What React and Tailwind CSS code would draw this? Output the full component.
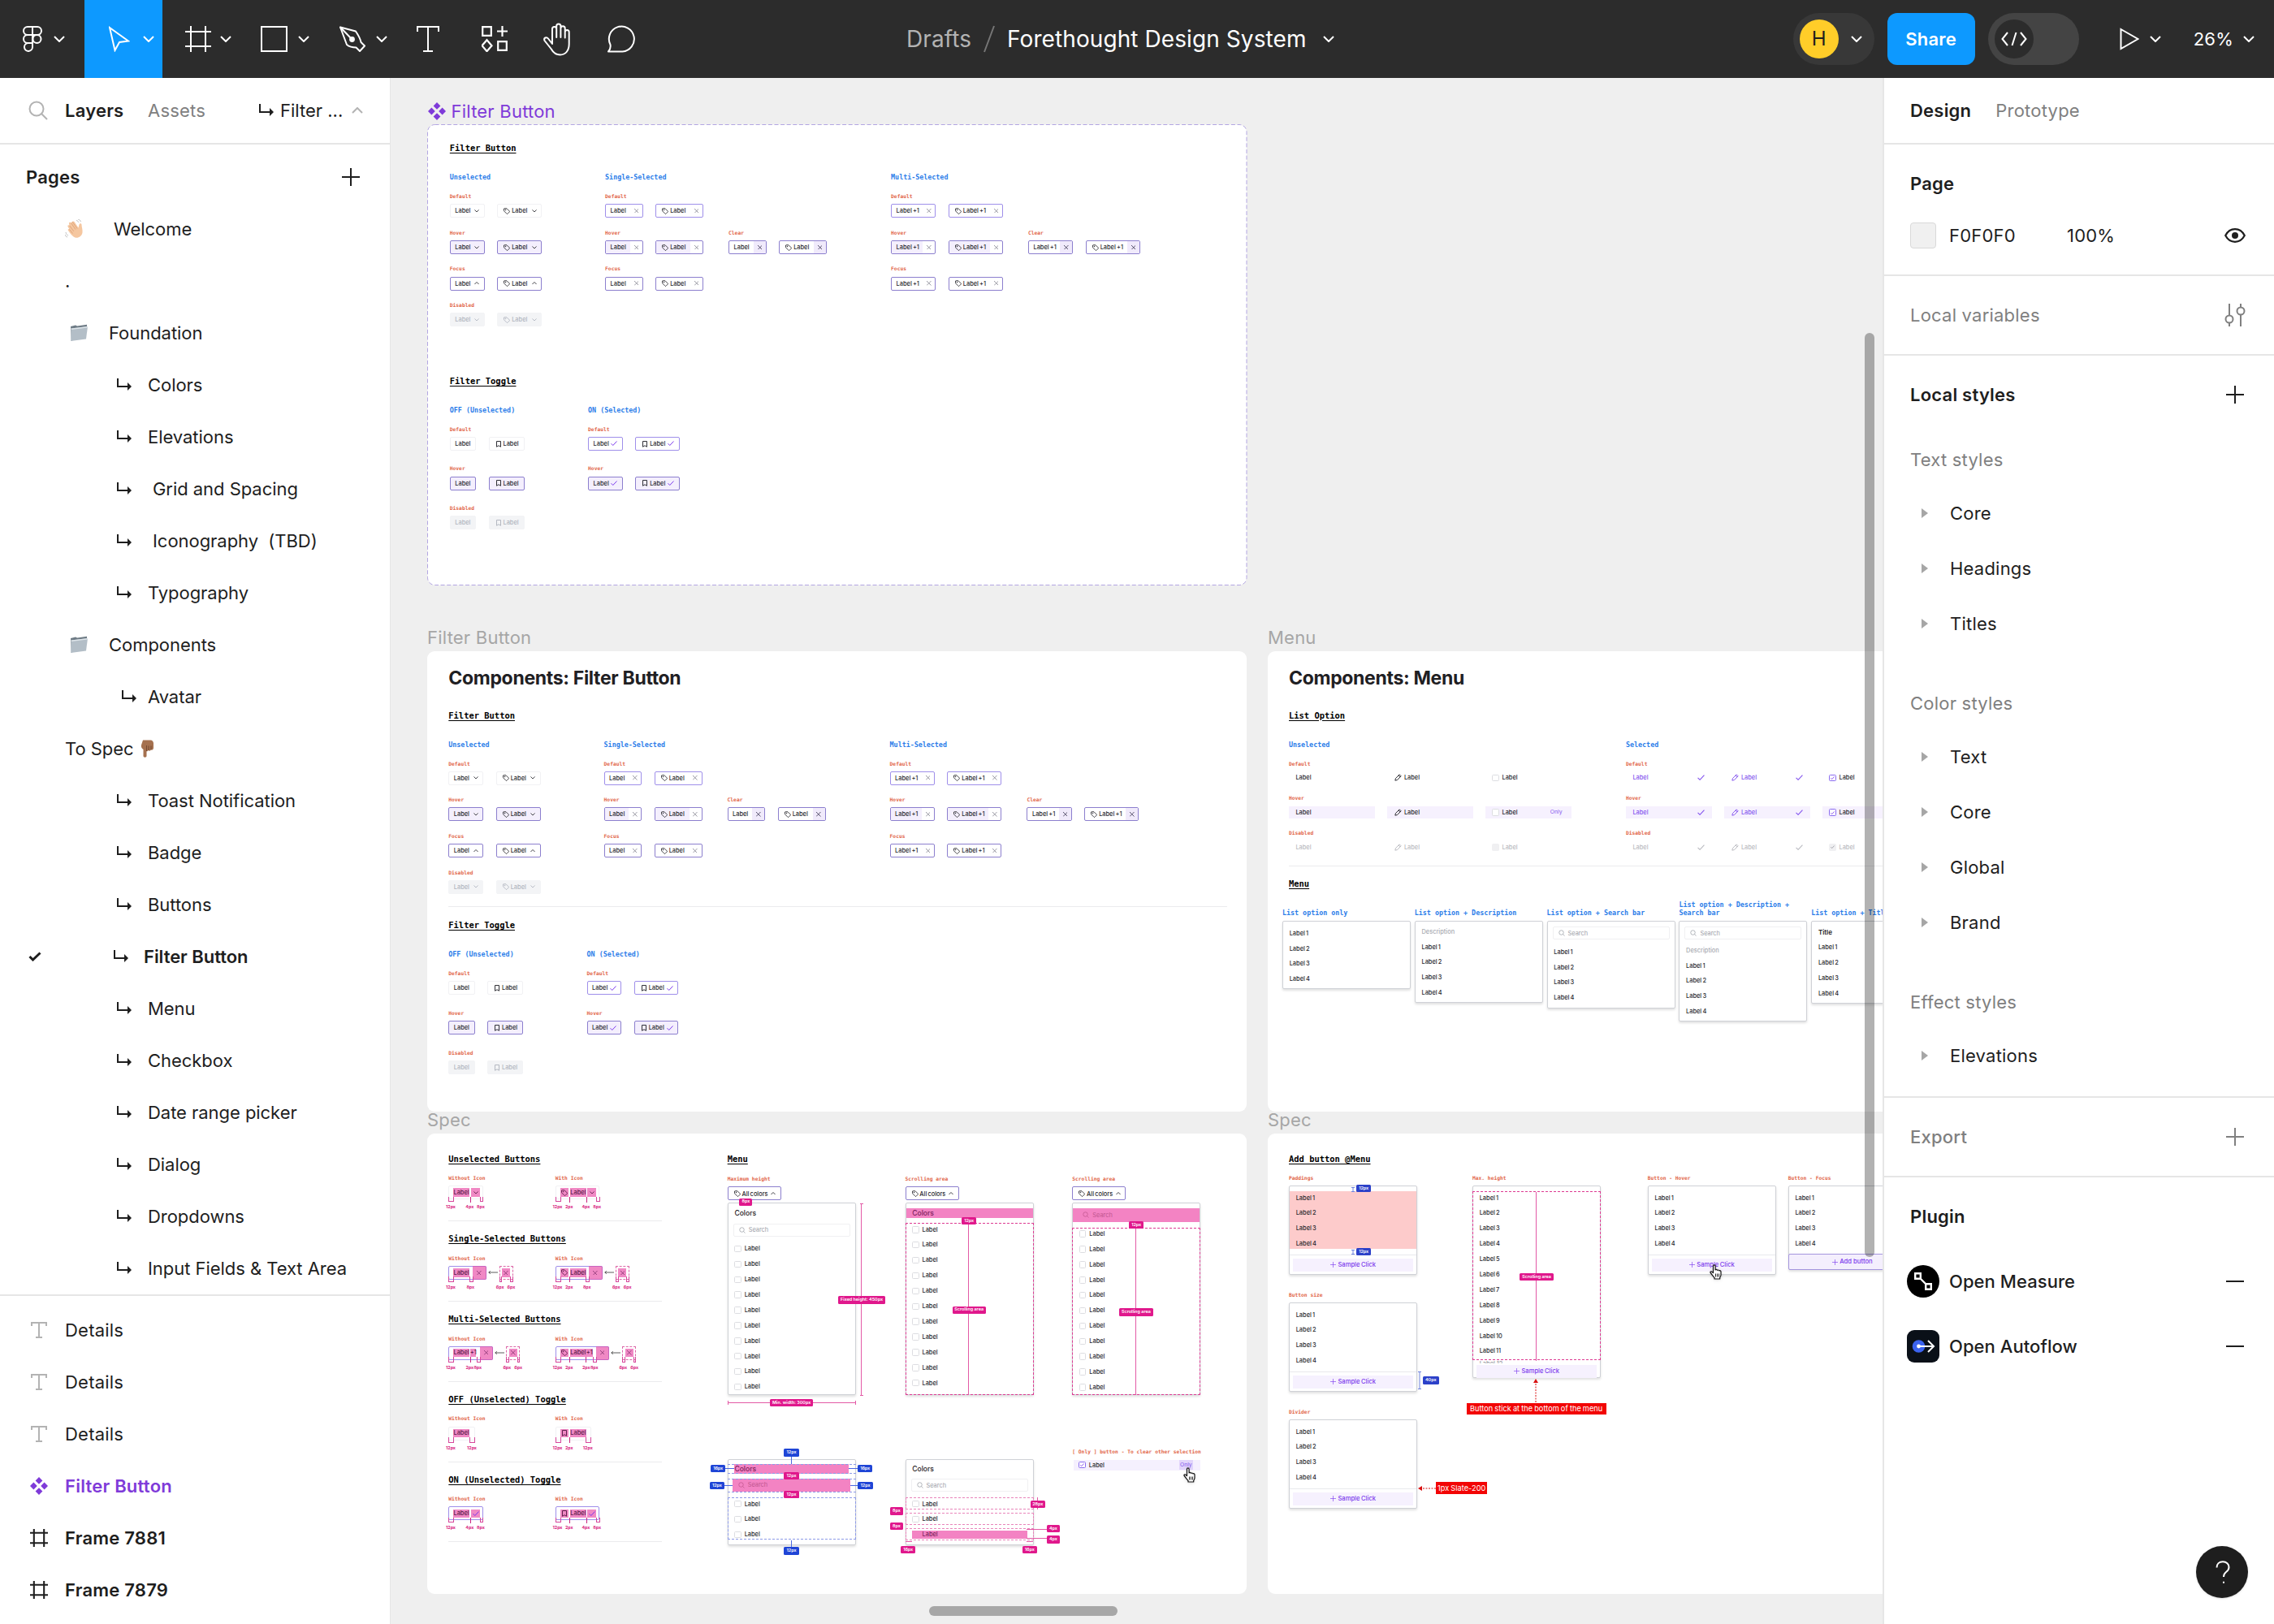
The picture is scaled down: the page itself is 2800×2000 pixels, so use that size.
import React from "react";

/* ---------- shared icons ---------- */

const Chevron = ({ up = false, className = "w-3.5 h-2" }) => (
  <svg viewBox="0 0 14 8" className={className} fill="none" stroke="currentColor" strokeWidth="2">
    <path d={up ? "M1 7l6-6 6 6" : "M1 1l6 6 6-6"} />
  </svg>
);

const Plus = ({ className = "size-[22px]" }) => (
  <svg viewBox="0 0 22 22" className={className} fill="none" stroke="currentColor" strokeWidth="2">
    <path d="M11 0v22M0 11h22" />
  </svg>
);

const FrameIcon = ({ className = "size-8", stroke = 2 }) => (
  <svg viewBox="0 0 32 32" className={className} fill="none" stroke="currentColor" strokeWidth={stroke}>
    <path d="M7 0v32M25 0v32M0 7h32M0 25h32" />
  </svg>
);

const ComponentIcon = ({ className = "size-[22px]" }) => (
  <svg viewBox="0 0 22 22" className={className} fill="currentColor">
    <path d="M11 0l4.400 4.400L11 8.800 6.600 4.400zM11 13.200l4.400 4.400L11 22l-4.400-4.400zM4.400 6.600L8.800 11l-4.400 4.400L0 11zM17.600 6.600L22 11l-4.400 4.400L13.200 11z" />
  </svg>
);

const TextIcon = () => (
  <svg viewBox="0 0 20 20" className="size-5 text-[#b3b3b3]" fill="none" stroke="currentColor" strokeWidth="2">
    <path d="M1 5V1h18v4M10 1v18M6 19h8" />
  </svg>
);

const NestArrow = () => (
  <svg viewBox="0 0 18 16" className="h-4 w-[18px]" fill="none" stroke="currentColor" strokeWidth="2">
    <path d="M1 0v10h14" />
    <path d="M13 5l5 5-5 5z" fill="currentColor" stroke="none" />
  </svg>
);

/* ---------- top bar ---------- */

function Toolbar() {
  return (
    <header className="flex h-24 w-full shrink-0 items-center bg-[#2c2c2c] text-white">
      <div className="flex h-full w-[1116px] items-center">
        <div className="flex h-full w-[104px] items-center gap-3.5 pl-7">
          <svg viewBox="0 0 24 32" className="h-8 w-6" fill="none" stroke="currentColor" strokeWidth="2">
            <path d="M12 1H6a5 5 0 0 0 0 10h6zM12 1h6a5 5 0 0 1 0 10h-6zM12 11H6a5 5 0 0 0 0 10h6zM12 21H6a5 5 0 1 0 6 5z" />
            <circle cx="17.500" cy="16" r="5" />
          </svg>
          <Chevron />
        </div>
        <div className="flex h-full w-24 items-center gap-4 bg-[#0d99ff] pl-[30px]">
          <svg viewBox="0 0 26 32" className="h-8 w-[26px]" fill="none" stroke="currentColor" strokeWidth="2">
            <path d="M1 2l23 16.500-11 1.500L7.500 30z" />
          </svg>
          <Chevron />
        </div>
        <div className="flex w-24 items-center gap-[11px] pl-7">
          <FrameIcon />
          <Chevron />
        </div>
        <div className="flex w-24 items-center gap-[13px] pl-[25px]">
          <svg viewBox="0 0 33 32" className="h-8 w-[33px]" fill="none" stroke="currentColor" strokeWidth="2">
            <path d="M1 1h31v30H1z" />
          </svg>
          <Chevron />
        </div>
        <div className="flex w-[108px] items-center gap-3 pl-[25px]">
          <svg viewBox="0 0 34 32" className="h-8 w-[34px]" fill="none" stroke="currentColor" strokeWidth="2" strokeLinejoin="round">
            <path d="M2 1.500l19 5c2.500 4 5.500 8 6.500 13.500l4.500 4.500-6 6.500-4.500-4.500c-5 0-8.500-1-11.500-3.500z" />
            <path d="M2 1.500L15 15" />
            <circle cx="16.500" cy="16.500" r="2.400" fill="currentColor" />
          </svg>
          <Chevron />
        </div>
        <svg viewBox="0 0 28 32" className="ml-[13px] h-8 w-7" fill="none" stroke="currentColor" strokeWidth="2">
          <path d="M1 7V1h26v6M14 1v30M8 31h12" />
        </svg>
        <svg viewBox="0 0 32 32" className="ml-[52px] size-8" fill="none" stroke="currentColor" strokeWidth="2.200">
          <path d="M1.200 1.200h10.600v10.600H1.200zM20.200 19.200h10.600v10.600H20.200zM6.500 17.200l6 7-6 7-6-7zM25.500 0v13M19 6.500h13" />
        </svg>
        <svg viewBox="0 0 37 41" className="ml-[43px] h-[41px] w-[37px]" fill="none" stroke="currentColor" strokeWidth="2" strokeLinejoin="round" strokeLinecap="round">
          <path d="M12 21V7.500a2.600 2.600 0 0 1 5.200 0V4a2.600 2.600 0 0 1 5.200 0v3a2.600 2.600 0 0 1 5.300 0v4.500a2.500 2.500 0 0 1 5 0V26c0 8-4 13.500-11 13.500-6 0-8.700-3-11.200-7.500L2.500 22c-1.500-3.500 2.500-5 4.500-2.500l5 6.500v-5M17.200 7v11M22.400 6v12M27.700 9v9.500" />
        </svg>
        <svg viewBox="0 0 37 34" className="ml-[42px] h-[34px] w-[37px]" fill="none" stroke="currentColor" strokeWidth="2" strokeLinejoin="round">
          <path d="M2 32.500c2-2 3-5.500 2.500-8.500A15.500 15.500 0 1 1 19.500 32.500z" />
        </svg>
      </div>
      <div className="flex items-center text-[28px] leading-8 tracking-[0.003em]">
        <span className="text-[#b3b3b3]">Drafts</span>
        <svg viewBox="0 0 14 34" className="mx-[15px] h-[34px] w-3.5 text-[#777]" fill="none" stroke="currentColor" strokeWidth="2">
          <path d="M13 1L1 33" />
        </svg>
        <span>Forethought Design System</span>
        <Chevron className="ml-5 h-2 w-3.5" />
      </div>
      <div className="ml-auto flex items-center pr-6">
        <div className="flex h-16 w-[100px] items-center rounded-full bg-[#383838] pl-2">
          <span className="flex size-12 items-center justify-center rounded-full bg-[#ffcd29] text-2xl text-[#1e1e1e]">H</span>
          <Chevron className="ml-[15px] h-2 w-3.5" />
        </div>
        <div className="ml-4 flex h-16 w-[108px] items-center justify-center rounded-xl bg-[#0d99ff] text-[22px] font-semibold tracking-[0.01em]">Share</div>
        <div className="ml-4 flex h-16 w-28 items-center rounded-full bg-[#444] pl-2">
          <span className="flex size-12 items-center justify-center rounded-full bg-[#2c2c2c]">
            <svg viewBox="0 0 32 18" className="h-[18px] w-8" fill="none" stroke="currentColor" strokeWidth="2">
              <path d="M8 1L1.500 9 8 17M24 1l6.500 8L24 17M18.500 1l-5 16" />
            </svg>
          </span>
        </div>
        <svg viewBox="0 0 24 28" className="ml-[50px] h-7 w-6" fill="none" stroke="currentColor" strokeWidth="2">
          <path d="M1.500 2l21 12-21 12z" />
        </svg>
        <Chevron className="ml-[13px] h-2 w-3.5" />
        <span className="ml-10 text-[22px] tracking-[0.01em]">26%</span>
        <Chevron className="ml-3 h-2 w-3.5" />
      </div>
    </header>
  );
}

/* ---------- left panel ---------- */

const WaveHand = () => (
  <svg viewBox="0 0 24 24" className="size-6">
    <path d="M12.500 22.500c-3-1-6-5-8.500-8.500-1-1.500.5-2.500 1.500-1.500L3.500 9c-.8-1.500 1-2.500 2-1.200L5 5.500C4.500 4 6.500 3.200 7.500 4.500L9 3c1-1 2.200-.5 3 .8l4.500 6.700 1-4c.4-1.800 3-1.800 3 .2 0 3 1.500 6 1 9.500-.6 4.500-5 7.500-9 6.300z" fill="#f5c7a0" />
    <path d="M7.500 4.500l5.500 8M5.500 7.800l5.300 7M5.500 12.500l4 5M9 3l6 8.500" stroke="#dca177" strokeWidth=".9" fill="none" />
    <path d="M14 1.500c1.500.3 2.500 1.300 3 2.500M16 0c1.800.4 3 1.500 3.500 3M1 16c.3 2 1.300 3.300 3 4M0 19c.6 1.600 1.600 2.600 3 3" stroke="#b9b9b9" strokeWidth=".9" fill="none" />
  </svg>
);

const PointDown = () => (
  <svg viewBox="0 0 20 24" className="ml-[7px] h-6 w-5">
    <path d="M4 1.500h9.500c2 0 3.500 2 3.500 4v5.500c0 2-1.500 3-3 2.500-.8 1.300-2.500 1.500-3.500.5-.4 1-1.300 1.300-2 1.200V21c0 2.300-4 2.300-4 0V13C2.500 12 1.500 10 2 7.500z" fill="#a5714f" />
    <path d="M8.500 15V8M11 14V8.500M14 13V8.500" stroke="#70462f" strokeWidth=".9" fill="none" />
  </svg>
);

const Folder = () => (
  <svg viewBox="0 0 23 22" className="h-[22px] w-[23px]">
    <path d="M1 3l6-1.500 2 1L21 .8 21 4 2 21z" fill="#6f7c86" />
    <path d="M1.500 5.500L22 3l-2 15.500L1.200 21z" fill="#b3bec7" />
    <path d="M1.500 5.500L22 3l-.2 1.500L2 7z" fill="#dde4e9" />
  </svg>
);

const Row = ({ pad = "pl-36", gap = "w-[39px]", bold, children }) => (
  <li className={`relative flex h-16 items-center whitespace-pre ${pad} ${bold ? "font-semibold" : ""}`}>
    {bold && (
      <svg viewBox="0 0 16 12" className="absolute left-[35px] h-3 w-4" fill="none" stroke="currentColor" strokeWidth="3">
        <path d="M1.500 6l4 4L14.500 1.500" />
      </svg>
    )}
    <span className={gap}><NestArrow /></span>
    {children}
  </li>
);

function LeftPanel() {
  return (
    <aside className="flex h-full w-[481px] shrink-0 flex-col border-r border-[#e6e6e6] bg-white text-[22px] leading-8 tracking-[0.01em] text-[#1e1e1e]">
      <div className="flex h-[82px] shrink-0 items-center border-b-2 border-[#e6e6e6] pl-[35px]">
        <svg viewBox="0 0 24 24" className="size-6 text-[#b3b3b3]" fill="none" stroke="currentColor" strokeWidth="2">
          <circle cx="10" cy="10" r="8.500" />
          <path d="M16 16l7 7" />
        </svg>
        <span className="ml-[21px] w-[102px] font-semibold">Layers</span>
        <span className="w-[137px] text-[#808080]">Assets</span>
        <NestArrow />
        <span className="ml-2 w-[88px] tracking-normal">Filter ...</span>
        <Chevron up className="h-2 w-3.5 text-[#b3b3b3]" />
      </div>
      <div className="flex h-[72px] shrink-0 items-center justify-between pl-8 pr-[37px] pt-2">
        <span className="font-semibold">Pages</span>
        <Plus />
      </div>
      <ul className="h-[1346px] shrink-0 border-b-2 border-[#e6e6e6] tracking-[-0.002em]">
        <li className="flex h-16 items-center pl-20"><span className="w-[60px]"><WaveHand /></span>Welcome</li>
        <li className="flex h-16 items-center pl-20">.</li>
        <li className="flex h-16 items-center pl-[86px]"><span className="w-12"><Folder /></span>Foundation</li>
        <Row gap="w-[38px]">Colors</Row>
        <Row gap="w-[38px]">Elevations</Row>
        <Row gap="w-11">Grid and Spacing</Row>
        <Row gap="w-11">{"Iconography  (TBD)"}</Row>
        <Row gap="w-[38px]">Typography</Row>
        <li className="flex h-16 items-center pl-[86px]"><span className="w-12"><Folder /></span>Components</li>
        <Row pad="pl-[150px]" gap="w-8">Avatar</Row>
        <li className="flex h-16 items-center pl-20">To Spec<PointDown /></li>
        <Row gap="w-[38px]">Toast Notification</Row>
        <Row gap="w-[38px]">Badge</Row>
        <Row gap="w-[38px]">Buttons</Row>
        <Row bold pad="pl-[140px]" gap="w-[37px]">Filter Button</Row>
        <Row gap="w-[38px]">Menu</Row>
        <Row gap="w-[38px]">Checkbox</Row>
        <Row gap="w-[38px]">Date range picker</Row>
        <Row gap="w-[38px]">Dialog</Row>
        <Row gap="w-[38px]">Dropdowns</Row>
        <Row gap="w-[38px]">{"Input Fields & Text Area"}</Row>
      </ul>
      <ul className="pt-2.5">
        {[0, 1, 2].map((i) => (
          <li key={i} className="flex h-16 items-center pl-[38px]"><span className="w-[42px]"><TextIcon /></span>Details</li>
        ))}
        <li className="flex h-16 items-center pl-[37px] font-semibold text-[#7f3bd9]"><span className="w-[43px]"><ComponentIcon /></span>Filter Button</li>
        <li className="flex h-16 items-center pl-[37px] font-semibold"><span className="w-[43px]"><FrameIcon stroke={3} className="size-[22px]" /></span>Frame 7881</li>
        <li className="flex h-16 items-center pl-[37px] font-semibold"><span className="w-[43px]"><FrameIcon stroke={3} className="size-[22px]" /></span>Frame 7879</li>
      </ul>
    </aside>
  );
}

/* ---------- right panel ---------- */

const StyleGroup = ({ title, items, first }) => (
  <div className={first ? "pt-4" : "pt-8"}>
    <div className="flex h-16 items-center text-[#808080]">{title}</div>
    {items.map((t) => (
      <div key={t} className="flex h-[68px] items-center pl-3.5">
        <svg viewBox="0 0 8 12" className="h-3 w-2 text-[#a6a6a6]" fill="currentColor"><path d="M0 0l8 6-8 6z" /></svg>
        <span className="ml-[27px]">{t}</span>
      </div>
    ))}
  </div>
);

const PluginRow = ({ icon, children }) => (
  <div className="-ml-1 flex h-20 items-center font-medium tracking-[0.003em]">
    {icon}
    <span className="ml-3">{children}</span>
    <span className="ml-auto h-0.5 w-[22px] bg-[#1e1e1e]" />
  </div>
);

function RightPanel() {
  return (
    <aside className="relative flex h-full w-[482px] shrink-0 flex-col border-l-2 border-[#e6e6e6] bg-white text-[22px] leading-8 tracking-[0.01em] text-[#1e1e1e]">
      <div className="flex h-[82px] items-center gap-[30px] border-b-2 border-[#e6e6e6] pl-8">
        <span className="font-semibold">Design</span>
        <span className="text-[#808080]">Prototype</span>
      </div>
      <section className="border-b-2 border-[#e6e6e6] py-4 pl-8 pr-[35px]">
        <div className="flex h-16 items-center font-semibold">Page</div>
        <div className="flex h-16 items-center">
          <span className="size-8 rounded-sm border border-[#d9d9d9] bg-[#f0f0f0]" />
          <span className="ml-4 w-[145px]">F0F0F0</span>
          <span>100%</span>
          <svg viewBox="0 0 26 18" className="ml-auto h-[18px] w-[26px]" fill="none" stroke="currentColor" strokeWidth="2.200">
            <path d="M1.200 9C4 3.800 8 1.200 13 1.200S22 3.800 24.800 9C22 14.200 18 16.800 13 16.800S4 14.200 1.200 9z" />
            <circle cx="13" cy="9" r="4" fill="currentColor" stroke="none" />
          </svg>
        </div>
      </section>
      <section className="border-b-2 border-[#e6e6e6] py-4 pl-8 pr-[35px]">
        <div className="flex h-16 items-center justify-between text-[#808080]">
          Local variables
          <svg viewBox="0 0 26 28" className="h-7 w-[26px]" fill="none" stroke="currentColor" strokeWidth="2">
            <path d="M6 0v14M6 24v4M20 0v4M20 14v14" />
            <circle cx="6" cy="19" r="4.500" />
            <circle cx="20" cy="9" r="4.500" />
          </svg>
        </div>
      </section>
      <section className="border-b-2 border-[#e6e6e6] py-4 pl-8 pr-[37px]">
        <div className="flex h-16 items-center justify-between font-semibold">Local styles<Plus /></div>
        <StyleGroup first title="Text styles" items={["Core", "Headings", "Titles"]} />
        <StyleGroup title="Color styles" items={["Text", "Core", "Global", "Brand"]} />
        <StyleGroup title="Effect styles" items={["Elevations"]} />
      </section>
      <section className="border-b-2 border-[#e6e6e6] py-4 pl-8 pr-[37px]">
        <div className="flex h-16 items-center justify-between font-medium text-[#808080]">Export<Plus /></div>
      </section>
      <section className="pl-8 pr-[37px] pt-4">
        <div className="mb-2 flex h-16 items-center font-semibold">Plugin</div>
        <PluginRow
          icon={
            <svg viewBox="0 0 40 40" className="size-10">
              <circle cx="20" cy="20" r="20" fill="#000" />
              <path d="M10.200 10.200h6.600v6.600h-6.600zM23.200 23.200h6.600v6.600h-6.600zM17 17l6 6" fill="none" stroke="#fff" strokeWidth="2.400" />
            </svg>
          }
        >
          Open Measure
        </PluginRow>
        <PluginRow
          icon={
            <svg viewBox="0 0 40 40" className="size-10">
              <rect width="40" height="40" rx="9" fill="#0a1018" />
              <circle cx="14.500" cy="20" r="7.800" fill="#3b63f0" />
              <circle cx="14.500" cy="20" r="2.400" fill="#fff" />
              <path d="M14 20h19M26 13l7 7-7 7" fill="none" stroke="#fff" strokeWidth="2" />
            </svg>
          }
        >
          Open Autoflow
        </PluginRow>
      </section>
      <div className="absolute bottom-8 right-8 flex size-16 items-center justify-center rounded-full bg-[#1e1e1e] text-white shadow">
        <svg viewBox="0 0 18 28" className="ml-0.5 h-7 w-[18px]" fill="none" stroke="currentColor" strokeWidth="2">
          <path d="M1.500 8.500C1.500 4 4.500 1.200 9 1.200s7.500 3 7.500 6.800c0 3-1.500 4.500-3.500 6S10 17 10 20" />
          <path d="M9 26.800h2" />
        </svg>
      </div>
    </aside>
  );
}

/* ---------- canvas primitives ---------- */

const At = ({ x, y, w, h, className = "", children }) => (
  <div className={`absolute ${className}`} style={{ left: x, top: y, width: w, height: h }}>{children}</div>
);

const Heading = ({ children }) => (
  <h3 className="whitespace-nowrap font-['DejaVu_Sans_Mono',monospace] text-[10.440px] font-bold leading-none text-black underline decoration-1 underline-offset-[1.500px]">{children}</h3>
);
const Blue = ({ children }) => (
  <h4 className="whitespace-nowrap font-['DejaVu_Sans_Mono',monospace] text-[8.360px] font-bold leading-none text-[#2b7de9]">{children}</h4>
);
const Red = ({ children }) => (
  <p className="whitespace-nowrap font-['DejaVu_Sans_Mono',monospace] text-[6.280px] font-bold leading-none text-[#e2674a]">{children}</p>
);
const BoardName = ({ x, y, children }) => (
  <At x={x} y={y} className="whitespace-nowrap text-[22px] leading-none tracking-[0.01em] text-[#a6a6a6]">{children}</At>
);
const BoardTitle = ({ children }) => (
  <h2 className="whitespace-nowrap text-[23px] font-bold leading-none tracking-[-0.014em] text-[#1f2023]">{children}</h2>
);

const TagIcon = () => (
  <svg viewBox="0 0 16 16" className="size-2 shrink-0" fill="none" stroke="currentColor" strokeWidth="1.700" strokeLinejoin="round">
    <path d="M1 2v5.500l7 7q1 1 2 0l4.500-4.500q1-1 0-2L8 1.500H2z" />
    <circle cx="5" cy="5" r=".8" fill="currentColor" />
  </svg>
);
const Bookmark = () => (
  <svg viewBox="0 0 16 16" className="size-2 shrink-0" fill="none" stroke="currentColor" strokeWidth="1.900">
    <path d="M3 1h10v13.500l-5-3-5 3z" />
  </svg>
);
const Check = ({ className = "h-1.5 w-2", stroke = 2 }) => (
  <svg viewBox="0 0 16 12" className={`shrink-0 ${className}`} fill="none" stroke="currentColor" strokeWidth={stroke}>
    <path d="M1 6.500L5.500 11 15 1" />
  </svg>
);
const Cross = () => (
  <svg viewBox="0 0 10 10" className="size-[5.500px] shrink-0" fill="none" stroke="currentColor" strokeWidth="1.600">
    <path d="M0 0l10 10M10 0L0 10" />
  </svg>
);
const Pencil = () => (
  <svg viewBox="0 0 16 16" className="size-[9px] shrink-0" fill="none" stroke="currentColor" strokeWidth="1.700" strokeLinejoin="round">
    <path d="M1.500 14.500l1-4.500L11 1.500l3.500 3.500L6 13.500zM9 3.500L12.500 7" />
  </svg>
);
const Magnifier = () => (
  <svg viewBox="0 0 16 16" className="size-2 shrink-0" fill="none" stroke="currentColor" strokeWidth="1.500">
    <circle cx="7" cy="7" r="5.500" />
    <path d="M11 11l4 4" />
  </svg>
);
const HandCursor = ({ x, y }) => (
  <At x={x} y={y} w={16} h={19}>
    <svg viewBox="0 0 16 19" className="h-[19px] w-4 drop-shadow" fill="#fff" stroke="#111" strokeWidth="1.200" strokeLinejoin="round">
      <path d="M4.500 10.500V2.200a1.300 1.300 0 0 1 2.600 0V7c.5-.9 2.100-.7 2.400.4.600-.7 2-.5 2.300.5.800-.5 2.200 0 2.200 1.300V13c0 1.500-1 2.500-1.300 3.500v1.500H6V16.500C4.500 15 3 12.500 1.200 10.500c-.8-1.200.8-2.300 1.800-1.300z" />
      <path d="M7.500 11.500v4M9.500 11.500v4M11.500 11.500v4" strokeWidth=".9" />
    </svg>
  </At>
);

const Board = ({ x, y, children }) => (
  <At x={x} y={y} w={1009} h={567} className="rounded-[9px] bg-white">{children}</At>
);

/* ---------- filter chips ---------- */

const SKIN = {
  plain: "border-[#f1f1f4] bg-white text-[#26262c]",
  picked: "border-[#9f8fea] bg-white text-[#26262c]",
  tint: "border-[#8c7fce] bg-[#f4effd] text-[#26262c]",
  focus: "border-[#8c7fce] bg-white text-[#26262c]",
  off: "border-[#f3f4f6] bg-[#f3f4f6] text-[#b0b4be]",
};
const END = {
  down: <Chevron className="h-[3.500px] w-1.5" />,
  up: <Chevron up className="h-[3.500px] w-1.5" />,
  check: <span className="text-[#7c3aed]"><Check /></span>,
};

/* One small filter chip; `half` tints only the label side or only the clear side. */
function Chip({ w, label = "Label", icon, end, skin = "plain", half }) {
  return (
    <div style={{ width: w }} className={`flex h-[17px] shrink-0 items-center overflow-hidden rounded-[2px] border text-[7.400px] font-medium leading-none [word-spacing:-0.800px] ${SKIN[skin]}`}>
      <div className={`flex h-full grow items-center whitespace-pre pt-[0.500px] ${icon ? "gap-[1.800px] pl-[7px]" : "pl-[5.500px]"} ${half === "label" ? "bg-[#f4effd]" : ""}`}>
        {icon === "tag" && <TagIcon />}
        {icon === "mark" && <Bookmark />}
        {label}
      </div>
      {end === "x" && (
        <div className={`flex h-full w-[15px] items-center justify-center ${half === "clear" ? "bg-[#f0eafb] text-[#44405c]" : "text-[#8d8d99]"}`}><Cross /></div>
      )}
      {end && end !== "x" && <div className="flex pr-[5.500px]">{END[end]}</div>}
    </div>
  );
}

const ChipState = ({ title, widths, icon = "tag", className = "", ...rest }) => (
  <div className={`flex flex-col gap-[5.800px] ${className}`}>
    <Red>{title}</Red>
    <div className="flex gap-[15.600px]">
      <Chip w={widths[0]} {...rest} />
      <Chip w={widths[1]} icon={icon} {...rest} />
    </div>
  </div>
);

const SelectedColumn = ({ title, label, widths, className, clearGap }) => (
  <div className={`flex flex-col gap-[16.300px] ${className}`}>
    <Blue>{title}</Blue>
    <div className="flex flex-col gap-[15.600px]">
      <ChipState title="Default" widths={widths} label={label} end="x" skin="picked" />
      <div className={`flex ${clearGap}`}>
        <ChipState title="Hover" widths={widths} label={label} end="x" skin="focus" half="label" />
        <ChipState title="Clear" widths={widths} label={label} end="x" skin="focus" half="clear" />
      </div>
      <ChipState title="Focus" widths={widths} label={label} end="x" skin="focus" />
    </div>
  </div>
);

const FilterChips = () => (
  <div className="flex">
    <div className="flex w-[191.300px] flex-col gap-[16.300px]">
      <Blue>Unselected</Blue>
      <div className="flex flex-col gap-[15.600px]">
        <ChipState title="Default" widths={[43, 54.7]} end="down" />
        <ChipState title="Hover" widths={[43, 54.7]} end="down" skin="tint" />
        <ChipState title="Focus" widths={[43, 54.7]} end="up" skin="focus" />
        <ChipState title="Disabled" widths={[43, 54.7]} end="down" skin="off" />
      </div>
    </div>
    <SelectedColumn title="Single-Selected" label="Label" widths={[46.7, 58.7]} className="w-[352px]" clearGap="gap-[31px]" />
    <SelectedColumn title="Multi-Selected" label="Label +1" widths={[55.3, 67]} clearGap="gap-[31px]" />
  </div>
);

const ToggleChips = () => (
  <div className="flex">
    <div className="flex w-[170.300px] flex-col gap-[16.500px]">
      <Blue>OFF (Unselected)</Blue>
      <div className="flex flex-col gap-[19.700px]">
        <ChipState title="Default" widths={[32.3, 44]} icon="mark" />
        <ChipState title="Hover" widths={[32.3, 44]} icon="mark" skin="tint" />
        <ChipState title="Disabled" widths={[32.3, 44]} icon="mark" skin="off" />
      </div>
    </div>
    <div className="flex flex-col gap-[16.500px]">
      <Blue>ON (Selected)</Blue>
      <div className="flex flex-col gap-[19.700px]">
        <ChipState title="Default" widths={[42.7, 54.3]} icon="mark" end="check" skin="picked" />
        <ChipState title="Hover" widths={[42.7, 54.3]} icon="mark" end="check" skin="tint" />
      </div>
    </div>
  </div>
);

/* ---------- menus ---------- */

const Card = ({ className = "", children }) => (
  <div className={`relative flex w-[158px] shrink-0 flex-col rounded-[2px] border border-[#cfd1d6] bg-white shadow-[0_2px_3px_rgba(0,0,0,0.12)] ${className}`}>{children}</div>
);
const Item = ({ className = "text-[#26262c]", children }) => (
  <div className={`flex h-[18.900px] shrink-0 items-center whitespace-nowrap pl-[7.700px] pt-px text-[7.400px] font-medium leading-none [word-spacing:-0.800px] ${className}`}>{children}</div>
);
const Items = ({ n }) => Array.from({ length: n }, (_, i) => <Item key={i}>{`Label ${i + 1}`}</Item>);

const CheckBox = ({ on, off }) => (
  <span className={`flex size-[8.500px] shrink-0 items-center justify-center rounded-[1.500px] border ${off ? "border-[#f0f0f2] bg-[#f0f0f2] text-[#9a9aa2]" : on ? "border-[#8b6cf0] bg-white text-[#7c3aed]" : "border-[#dcdde1] bg-white"}`}>
    {on && <Check className="h-1 w-[5px]" stroke={2.8} />}
  </span>
);
const CheckItems = ({ n }) =>
  Array.from({ length: n }, (_, i) => (
    <Item key={i}>
      <span className="mr-[3.800px] flex"><CheckBox /></span>
      Label
    </Item>
  ));
const SearchBox = ({ className = "" }) => (
  <div className={`mx-[6px] flex h-4 shrink-0 items-center gap-1 rounded-[2px] border border-[#f0f0f2] pl-[6px] text-[7.400px] leading-none text-[#9a9da6] ${className}`}>
    <Magnifier />Search
  </div>
);

function Option({ kind, selected, state }) {
  const ink = state === "off" ? "text-[#b9bac0]" : selected && kind !== "box" ? "text-[#8455ee]" : "text-[#26262c]";
  return (
    <div className={`flex h-[15.500px] w-[105.500px] shrink-0 items-center pl-[8.400px] text-[7.400px] font-medium leading-none ${ink} ${state === "hover" ? "bg-[#f6f1fe]" : ""}`}>
      {kind === "pencil" && <span className="mr-[2.500px] flex pl-[1px]"><Pencil /></span>}
      {kind === "box" && <span className="mr-[3.600px] flex"><CheckBox on={selected} off={state === "off"} /></span>}
      <span className="pt-[0.500px]">Label</span>
      {selected && kind !== "box" && <span className="ml-auto pr-[9px]"><Check className="h-[7px] w-[9px]" /></span>}
      {kind === "box" && state === "hover" && !selected && <span className="ml-auto pr-[11px] text-[6.800px] font-normal text-[#8455ee]">Only</span>}
    </div>
  );
}

const OptionStates = ({ title, selected, className = "" }) => (
  <div className={`flex flex-col gap-[16.300px] ${className}`}>
    <Blue>{title}</Blue>
    <div className="flex flex-col gap-[14.600px]">
      {["Default", "Hover", "Disabled"].map((t, i) => (
        <div key={t} className="flex flex-col gap-[6.300px]">
          <Red>{t}</Red>
          <div className="flex gap-[15.500px]">
            {["text", "pencil", "box"].map((k) => <Option key={k} kind={k} selected={selected} state={["", "hover", "off"][i]} />)}
          </div>
        </div>
      ))}
    </div>
  </div>
);

const MenuSample = ({ title, children }) => (
  <div className="flex w-[158px] shrink-0 flex-col">
    <div className="mb-[5px] flex h-5 items-end whitespace-pre font-['DejaVu_Sans_Mono',monospace] text-[8.360px] font-bold leading-[9.600px] text-[#2b7de9]">{title}</div>
    {children}
  </div>
);

const MenuBoard = () => (
  <Board x={1561} y={802}>
    <div className="flex flex-col pl-[26px] pt-[21.500px]">
      <BoardTitle>Components: Menu</BoardTitle>
      <div className="mt-[29px]"><Heading>List Option</Heading></div>
      <div className="mt-[27px] flex">
        <OptionStates title="Unselected" className="w-[415px]" />
        <OptionStates title="Selected" selected />
      </div>
      <div className="mt-[15px] h-px w-[960px] bg-[#ececee]" />
      <div className="mt-4"><Heading>Menu</Heading></div>
      <div className="-ml-2 mt-4 flex items-start gap-[4.800px]">
        <MenuSample title="List option only">
          <Card className="h-[84px] pt-1"><Items n={4} /></Card>
        </MenuSample>
        <MenuSample title="List option + Description">
          <Card className="h-[101px] pt-0.5"><Item className="text-[#a9abb2]">Description</Item><Items n={4} /></Card>
        </MenuSample>
        <MenuSample title="List option + Search bar">
          <Card className="h-[108px] pt-[6px]"><SearchBox className="mb-[5px]" /><Items n={4} /></Card>
        </MenuSample>
        <MenuSample title={"List option + Description +\nSearch bar"}>
          <Card className="h-[124px] pt-[6px]"><SearchBox className="mb-[3px]" /><Item className="text-[#a9abb2]">Description</Item><Items n={4} /></Card>
        </MenuSample>
        <MenuSample title="List option + Title">
          <Card className="h-[102px] pt-[2.500px]"><Item className="text-[8px] font-semibold text-[#1f2023]">Title</Item><Items n={4} /></Card>
        </MenuSample>
      </div>
    </div>
  </Board>
);

/* ---------- measurement overlays ---------- */

const VLine = ({ x, y, h, className = "bg-[#e35aa6]" }) => <At x={x} y={y} w={1} h={h} className={className} />;
const HLine = ({ x, y, w, className = "bg-[#e35aa6]" }) => <At x={x} y={y} w={w} h={1} className={className} />;
const Badge = ({ x, y, w, tone = "bg-[#e0188c]", children }) => (
  <At x={x} y={y} w={w} h={9.3} className={`flex items-center justify-center whitespace-nowrap rounded-[1.500px] text-[5.400px] font-semibold leading-none text-white ${tone}`}>{children}</At>
);
const BLUE_BADGE = "bg-[#1f45d6]";
const Dashes = ({ x, y, w, h, className = "border-[#dd3a92]" }) => <At x={x} y={y} w={w} h={h} className={`border border-dashed ${className}`} />;

/* ---------- board: button spacing spec ---------- */

const SPEC_ROWS = [
  {
    title: "Unselected Buttons",
    cols: [
      { w: 42.5, skin: "plain", label: 6, end: ["down", 28], u: [[0, 6], [38.3, 42.3]], ticks: [26.7], nums: [["12px", 2.7], ["4px", 26], ["8px", 39.7]] },
      { w: 54, skin: "plain", icon: "tag", label: 18.3, end: ["down", 39.7], u: [[0, 6], [50.3, 54]], ticks: [17.3, 38.3], nums: [["12px", 2.7], ["2px", 17], ["4px", 37.7], ["8px", 51.3]] },
    ],
  },
  {
    title: "Single-Selected Buttons",
    cols: [
      { w: 46.7, skin: "picked", label: 6, zone: 30, u: [[0, 6], [26, 30]], ticks: [], nums: [["12px", 2.7], ["8px", 27]], ghost: 62.3 },
      { w: 58, skin: "picked", icon: "tag", label: 18.3, zone: 41.3, u: [[0, 6], [37.3, 41.3]], ticks: [17.3], nums: [["12px", 2.7], ["2px", 17], ["8px", 39]], ghost: 74 },
    ],
  },
  {
    title: "Multi-Selected Buttons",
    cols: [
      { w: 55, skin: "picked", label: 6, plus: 26.7, zone: 38.7, u: [[0, 6], [34.3, 38.7]], ticks: [26.3], nums: [["12px", 2.7], ["2px", 26], ["8px", 36]], ghost: 71 },
      { w: 66.7, skin: "picked", icon: "tag", label: 18.3, plus: 38.3, zone: 50, u: [[0, 6], [46, 50]], ticks: [17.3, 37.7], nums: [["12px", 2.7], ["2px", 17], ["2px", 38], ["8px", 48]], ghost: 82.5 },
    ],
  },
  {
    title: "OFF (Unselected) Toggle",
    cols: [
      { w: 32.3, skin: "plain", label: 6, u: [[0, 6], [26, 32]], ticks: [], nums: [["12px", 2.7], ["12px", 28.7]] },
      { w: 44, skin: "plain", icon: "mark", label: 18.3, u: [[0, 6], [37.7, 43.7]], ticks: [17.3], nums: [["12px", 2.7], ["2px", 17], ["12px", 40]] },
    ],
  },
  {
    title: "ON (Unselected) Toggle",
    cols: [
      { w: 42.5, skin: "picked", label: 6, end: ["check", 28], u: [[0, 6], [38.3, 42.3]], ticks: [26.7], nums: [["12px", 2.7], ["4px", 26], ["8px", 39.7]] },
      { w: 54, skin: "picked", icon: "mark", label: 18.3, end: ["check", 39.7], u: [[0, 6], [50.3, 54]], ticks: [17.3, 38.3], nums: [["12px", 2.7], ["2px", 17], ["4px", 37.7], ["8px", 51.3]] },
    ],
  },
];

const Mark = ({ x, w, children }) => (
  <At x={x} y={3.3} w={w} h={10.3} className="flex items-center justify-center whitespace-nowrap bg-[#f088c4] text-[7.400px] font-medium leading-none text-[#5b1a48]">{children}</At>
);
const Num = ({ x, children }) => (
  <div className="absolute top-[24px] -translate-x-1/2 whitespace-nowrap text-[5.300px] font-bold leading-none text-[#d81b80]" style={{ left: x }}>{children}</div>
);
const Cup = ({ x, w }) => <At x={x} y={13.5} w={w + 0.8} h={6.5} className="border border-t-0 border-[#d6469b]" />;

function SpecChip({ title, c }) {
  return (
    <div className="flex w-[133.500px] flex-col gap-[5.900px]">
      <Red>{title}</Red>
      <div className="relative h-[17px]">
        <div style={{ width: c.w }} className={`h-[17px] rounded-[2px] border ${SKIN[c.skin]}`} />
        {c.icon && <Mark x={6.3} w={10.3}>{c.icon === "tag" ? <TagIcon /> : <Bookmark />}</Mark>}
        <Mark x={c.label} w={19.5}>Label</Mark>
        {c.plus && <Mark x={c.plus} w={7.5}>+1</Mark>}
        {c.end && <Mark x={c.end[1]} w={10.5}>{END[c.end[0]]}</Mark>}
        {c.zone && <At x={c.zone} y={0} w={c.w - c.zone} h={17} className="flex items-center justify-center rounded-r-[2px] border border-l-0 border-[#c864c0] bg-[#f088c4] text-[#8e3a78]"><Cross /></At>}
        {c.u.map(([a, b]) => <Cup key={a} x={a} w={b - a} />)}
        {c.ticks.map((t) => <VLine key={t} x={t} y={13.5} h={7} className="bg-[#c9257f]" />)}
        {c.nums.map(([t, n]) => <Num key={n} x={n}>{t}</Num>)}
        {c.ghost && (
          <>
            <At x={c.ghost - 13.8} y={6.5}>
              <svg viewBox="0 0 12 4" className="h-1 w-3" fill="none" stroke="#333" strokeWidth=".8"><path d="M12 2H.8M2.800 .3L.8 2l2 1.700" /></svg>
            </At>
            <Dashes x={c.ghost} y={0} w={17} h={17.5} className="border-[#dc6aa9]" />
            <Mark x={c.ghost + 3.4} w={10.2}><span className="text-[#8e3a78]"><Cross /></span></Mark>
            <Cup x={c.ghost} w={3} />
            <Cup x={c.ghost + 13.4} w={3} />
            <Num x={c.ghost + 1}>6px</Num>
            <Num x={c.ghost + 14.8}>6px</Num>
          </>
        )}
      </div>
    </div>
  );
}

const AllColors = ({ x, caption, children }) => (
  <At x={x} y={53} className="flex flex-col">
    <Red>{caption}</Red>
    <div className="mb-[3px] mt-[6.700px] flex"><Chip w={66} icon="tag" label="All colors" end="up" skin="focus" /></div>
    <Card className="h-[236.500px]">{children}</Card>
  </At>
);

const PinkSearch = ({ className = "" }) => (
  <div className={`flex shrink-0 items-center gap-1 bg-[#f383c3] text-[7.400px] leading-none text-[#c0568f] ${className}`}><Magnifier />Search</div>
);

const SpecBoard = () => (
  <Board x={526} y={1395.5}>
    <div className="flex w-[263px] flex-col gap-[16px] pt-[26px] [margin-left:26.300px]">
      {SPEC_ROWS.map((r) => (
        <section key={r.title} className="h-[82.800px] border-b border-[#ebebed]">
          <Heading>{r.title}</Heading>
          <div className="mt-[16px] flex">
            <SpecChip title="Without Icon" c={r.cols[0]} />
            <SpecChip title="With Icon" c={r.cols[1]} />
          </div>
        </section>
      ))}
    </div>

    <At x={369.7} y={26}><Heading>Menu</Heading></At>

    <AllColors x={369.7} caption="Maximum height">
      <div className="pl-[7.700px] pt-2 text-[8.600px] font-medium leading-none text-[#1f2023]">Colors</div>
      <SearchBox className="mb-[5px] mt-[8px]" />
      <CheckItems n={10} />
    </AllColors>
    <VLine x={534} y={86.5} h={236} />
    <HLine x={532.5} y={86.5} w={4} />
    <HLine x={532.5} y={322} w={4} />
    <Badge x={506.3} y={200.8} w={57.5}>Fixed height: 450px</Badge>
    <Badge x={384.4} y={80} w={16}>8px</Badge>
    <HLine x={369.7} y={331.800} w={158} />
    <VLine x={369.7} y={329.500} h={5} />
    <VLine x={527} y={329.500} h={5} />
    <Badge x={422.4} y={327.4} w={52.5}>Min. width: 300px</Badge>

    <AllColors x={588.5} caption="Scrolling area">
      <div className="mb-[11.500px] mt-[5.700px] flex h-[11.500px] shrink-0 items-center bg-[#f383c3] pl-[7.700px] text-[8.600px] font-medium leading-none text-[#7d1f5c]">Colors</div>
      <div className="-mt-[6.800px]"><CheckItems n={11} /></div>
    </AllColors>
    <Dashes x={588.5} y={110.800} w={158} h={211.5} />
    <VLine x={666.3} y={111.5} h={211} />
    <Badge x={658} y={103.1} w={18.3}>12px</Badge>
    <Badge x={646.5} y={213} w={41.3}>Scrolling area</Badge>

    <AllColors x={794.3} caption="Scrolling area">
      <PinkSearch className="mb-[5px] mt-[5.700px] h-[16.500px] pl-3" />
      <CheckItems n={11} />
    </AllColors>
    <Dashes x={794.3} y={116.2} w={158} h={206.3} />
    <VLine x={872} y={116.5} h={206} />
    <Badge x={864} y={108.5} w={18.3}>12px</Badge>
    <Badge x={852.3} y={215.8} w={41.3}>Scrolling area</Badge>

    <At x={369.7} y={401.2}>
      <Card className="h-[106.300px]">
        <div className="mx-[7.700px] mt-[5.500px] flex h-[11.600px] shrink-0 items-center bg-[#f383c3] text-[8.600px] font-medium leading-none text-[#7d1f5c]">Colors</div>
        <PinkSearch className="mx-[5.500px] mb-[5px] mt-[6px] h-[16.500px] pl-[6.500px]" />
        <CheckItems n={3} />
      </Card>
    </At>
    <Dashes x={370} y={407.5} w={157.5} h={11.5} className="border-x-0 border-[#8d9ae8]" />
    <Dashes x={370} y={425.5} w={157.5} h={16.5} className="border-x-0 border-[#8d9ae8]" />
    <Dashes x={370} y={448.7} w={157.5} h={52.3} className="border-[#8d9ae8]" />
    <VLine x={448} y={397.5} h={10} className="bg-[#4a68e0]" />
    <VLine x={448} y={501} h={9} className="bg-[#4a68e0]" />
    <HLine x={367} y={412.800} w={11} className="bg-[#4a68e0]" />
    <HLine x={519} y={412.800} w={11} className="bg-[#4a68e0]" />
    <HLine x={366} y={433.5} w={10} className="bg-[#4a68e0]" />
    <HLine x={521} y={433.5} w={10} className="bg-[#4a68e0]" />
    <Badge x={439.4} y={388.8} w={18.3} tone={BLUE_BADGE}>12px</Badge>
    <Badge x={439.4} y={509.9} w={18.3} tone={BLUE_BADGE}>12px</Badge>
    <Badge x={349} y={408.5} w={18.3} tone={BLUE_BADGE}>16px</Badge>
    <Badge x={530} y={408.5} w={18.3} tone={BLUE_BADGE}>16px</Badge>
    <Badge x={347.8} y={429.1} w={18.3} tone={BLUE_BADGE}>12px</Badge>
    <Badge x={530.4} y={429.1} w={18.3} tone={BLUE_BADGE}>12px</Badge>
    <Badge x={439.4} y={417.5} w={18.3}>12px</Badge>
    <Badge x={439.4} y={440.5} w={18.3}>12px</Badge>

    <At x={588.5} y={401.2}>
      <Card className="h-[106.300px]">
        <div className="pl-[7.700px] pt-[7.500px] text-[8.600px] font-medium leading-none text-[#1f2023]">Colors</div>
        <SearchBox className="mb-[5px] mt-[7.500px]" />
        <CheckItems n={2} />
        <div className="mx-[7px] mt-[5px] flex h-[9.800px] shrink-0 items-center bg-[#f383c3] pl-[13px] text-[7.400px] font-medium leading-none text-[#7d1f5c]">Label</div>
      </Card>
    </At>
    {[448.7, 467.6, 486.5].map((y) => <Dashes key={y} x={588.5} y={y} w={158} h={14.5} className="border-[#e884ba]" />)}
    <VLine x={751} y={448.5} h={14.5} />
    <HLine x={737.5} y={487.2} w={26} />
    <HLine x={737.5} y={498.7} w={26} />
    <HLine x={589} y={502} w={8} />
    <HLine x={738} y={502} w={8} />
    <Badge x={742.5} y={452.1} w={18.5}>28px</Badge>
    <Badge x={570} y={460.8} w={15.8}>8px</Badge>
    <Badge x={570} y={479.7} w={15.8}>8px</Badge>
    <Badge x={763} y={482.7} w={15.8}>4px</Badge>
    <Badge x={763} y={495.8} w={15.8}>4px</Badge>
    <Badge x={583} y={508.1} w={18.3}>16px</Badge>
    <Badge x={732.7} y={508.1} w={18.3}>16px</Badge>

    <At x={794.3} y={389.3} className="flex flex-col gap-[6.500px]">
      <Red>[ Only ] button - To clear other selection</Red>
      <div className="ml-[1.500px] flex h-[13.300px] w-[156px] items-center bg-[#f5f0fe] pl-[6.500px] text-[7.400px] font-medium leading-none text-[#26262c]">
        <span className="mr-[4px] flex"><CheckBox on /></span>
        Label
        <span className="ml-auto mr-[9px] flex h-[11.500px] w-[17px] items-center justify-center bg-[#e2d5fb] text-[6.800px] font-normal text-[#8455ee]">Only</span>
      </div>
    </At>
    <HandCursor x={930.5} y={411.5} />
  </Board>
);

/* ---------- board: add button spec ---------- */

const AddButton = ({ className = "" }) => (
  <div className={`mx-1 flex h-4 shrink-0 items-center justify-center gap-[2.500px] bg-[#f6f1fe] text-[7.600px] font-medium leading-none text-[#7c3aed] [word-spacing:-0.500px] ${className}`}>
    <Plus className="size-[7px]" />Sample Click
  </div>
);

const AddCard = ({ tint, caption }) => (
  <div className="flex flex-col gap-[5.500px]">
    <Red>{caption}</Red>
    <Card className="h-[110.300px]">
      <div className={`mt-[6px] h-[71.500px] shrink-0 ${tint ? "bg-[#fdcbcb]" : ""}`}>
        <div className="-mt-[1.400px]"><Items n={4} /></div>
      </div>
      <div className="mb-1 mt-[6.500px] h-px shrink-0 bg-[#e8e9ed]" />
      <AddButton />
    </Card>
  </div>
);

const Beam = ({ x, y, h }) => (
  <At x={x} y={y} w={4} h={h}>
    <svg viewBox={`0 0 4 ${h}`} className="h-full w-full" fill="none" stroke="#6f83dd"><path d={`M0 .5h4M2 0v${h}M0 ${h - 0.5}h4`} /></svg>
  </At>
);

const RedNote = ({ x, y, w, children }) => (
  <At x={x} y={y} w={w} h={14.6} className="flex items-center justify-center whitespace-nowrap bg-[#f20505] text-[9.200px] leading-none tracking-[0.005em] text-white [word-spacing:-0.600px]">{children}</At>
);

const AddButtonBoard = () => (
  <Board x={1561} y={1395.5}>
    <div className="flex flex-col pl-[26px] pt-[26px]">
      <Heading>Add button @Menu</Heading>
      <div className="mt-4 flex items-start">
        <div className="flex w-[226px] flex-col gap-[21.900px]">
          <AddCard caption="Paddings" tint />
          <AddCard caption="Button size" />
          <AddCard caption="Divider" />
        </div>
        <div className="flex w-[215.800px] flex-col gap-[5.500px]">
          <Red>Max. height</Red>
          <Card className="h-[237.300px] pt-[4.600px]">
            <Items n={11} />
            <div className="h-[5.500px] shrink-0 overflow-hidden pl-[7.700px] text-[7.400px] font-medium leading-[14px] text-[#9a9aa2]">Label 12</div>
            <AddButton className="mt-[2px]" />
          </Card>
        </div>
        <div className="w-[172.900px]"><AddCard caption="Button - Hover" /></div>
        <div className="flex flex-col gap-[5.500px]">
          <Red>Button - Focus</Red>
          <Card className="h-[104.300px] pt-[4.600px]">
            <Items n={4} />
            <div className="-mx-px -mb-px mt-auto flex h-5 shrink-0 items-center justify-center gap-[2.500px] rounded-[2px] border border-[#a495dd] bg-[#f4effd] text-[7.700px] font-medium leading-none text-[#7c3aed]">
              <Plus className="size-[7px]" />Add button
            </div>
          </Card>
        </div>
      </div>
    </div>

    <Beam x={102.5} y={66} h={6} />
    <Beam x={102.5} y={143.500} h={6} />
    <Badge x={109} y={63.7} w={18.3} tone="bg-[#2c41c9]">12px</Badge>
    <Badge x={109} y={141.5} w={18.3} tone="bg-[#2c41c9]">12px</Badge>
    <Beam x={185} y={293.5} h={22} />
    <Badge x={191} y={299.8} w={19.5} tone="bg-[#2c41c9]">40px</Badge>
    <At x={184.5} y={434.2}>
      <svg viewBox="0 0 23 6" className="h-1.5 w-[23px]" stroke="#d81010" fill="#d81010"><path d="M0 3l5-3v6z" stroke="none" /><path d="M6 3h17" strokeDasharray="2 1.500" /></svg>
    </At>
    <RedNote x={207} y={429.9} w={63.3}>1px Slate-200</RedNote>

    <Dashes x={252} y={71.7} w={158} h={208.3} />
    <VLine x={330} y={72} h={208} />
    <Badge x={310.4} y={172.1} w={41.5}>Scrolling area</Badge>
    <At x={327.3} y={302.1}>
      <svg viewBox="0 0 6 30" className="h-[30px] w-1.5" stroke="#d81010" fill="#d81010"><path d="M3 0l3 5H0z" stroke="none" /><path d="M3 6v24" strokeDasharray="2 1.500" /></svg>
    </At>
    <RedNote x={244.6} y={332.3} w={172}>Button stick at the bottom of the menu</RedNote>
    <HandCursor x={544} y={161} />
  </Board>
);

/* ---------- canvas ---------- */

/* The stage is offset by the top bar and left panel, so board positions are window coordinates. */
function Canvas() {
  return (
    <main className="relative h-full min-w-0 grow overflow-hidden bg-[#efefef]">
      <div className="absolute -left-[481px] -top-24 h-[2000px] w-[2800px]">
        <At x={526.5} y={126} className="flex items-center gap-[7px] whitespace-nowrap text-[22px] leading-none tracking-[0.01em] text-[#7f3bd9]">
          <ComponentIcon />Filter Button
        </At>
        <At x={526} y={153} w={1010} h={568}>
          <svg viewBox="0 0 1010 568" className="absolute h-[568px] w-[1010px]">
            <rect x=".5" y=".5" width="1008.500" height="567" rx="9" fill="#fff" stroke="#b3a6e2" strokeDasharray="5 2.600" />
          </svg>
          <div className="relative flex flex-col pl-[27.800px] pt-[24px]">
            <Heading>Filter Button</Heading>
            <div className="mb-[61.500px] mt-[27px]"><FilterChips /></div>
            <Heading>Filter Toggle</Heading>
            <div className="mt-[26.700px]"><ToggleChips /></div>
          </div>
        </At>

        <BoardName x={526} y={774}>Filter Button</BoardName>
        <Board x={526} y={802}>
          <div className="flex flex-col pl-[26.300px] pt-[21.500px]">
            <BoardTitle>Components: Filter Button</BoardTitle>
            <div className="mt-[29px]"><Heading>Filter Button</Heading></div>
            <div className="mt-[27px]"><FilterChips /></div>
            <div className="mb-[17px] mt-[15.500px] h-px w-[959px] bg-[#ebebed]" />
            <Heading>Filter Toggle</Heading>
            <div className="mt-[26.700px]"><ToggleChips /></div>
          </div>
        </Board>

        <BoardName x={1561} y={774}>Menu</BoardName>
        <MenuBoard />

        <BoardName x={526} y={1368}>Spec</BoardName>
        <SpecBoard />

        <BoardName x={1561} y={1368}>Spec</BoardName>
        <AddButtonBoard />

        <At x={2296} y={410} w={12} h={1138} className="rounded-full bg-black/30" />
        <At x={1144} y={1978} w={232} h={12} className="rounded-full bg-black/30" />
      </div>
    </main>
  );
}

export default function App() {
  return (
    <div className="flex h-[2000px] w-[2800px] flex-col overflow-hidden font-['Inter',sans-serif]">
      <Toolbar />
      <div className="flex min-h-0 grow">
        <LeftPanel />
        <Canvas />
        <RightPanel />
      </div>
    </div>
  );
}
